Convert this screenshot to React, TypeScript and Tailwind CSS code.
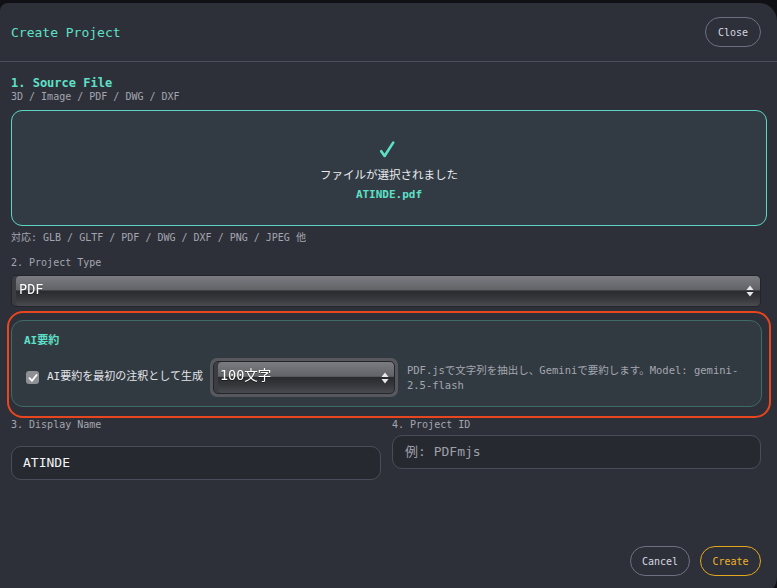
import React from "react";

const mono = "font-['DejaVu_Sans_Mono','Noto_Sans_CJK_JP',monospace]";

function Arrows() {
  return (
    <svg width="8" height="12" viewBox="0 0 8 12" className="shrink-0">
      <path d="M4 0.5 L7.5 5 L0.5 5 Z" fill="#e8e8ea" />
      <path d="M4 11.5 L7.5 7 L0.5 7 Z" fill="#e8e8ea" />
    </svg>
  );
}

function GlossySelect({ label, className, textClass }: { label: string; className: string; textClass: string }) {
  return (
    <div
      className={`relative flex items-center justify-between rounded-[5px] border border-[#24252a] bg-[linear-gradient(to_bottom,#7b7c81_0%,#626367_46%,#2a2b2f_50%,#37383c_75%,#4a4b50_100%)] shadow-[inset_4px_0_0_#3c3d42] ${className}`}
    >
      <span className={`${textClass} text-white drop-shadow-[0_1px_0_rgba(0,0,0,0.4)]`}>{label}</span>
      <Arrows />
    </div>
  );
}

export default function App() {
  return (
    <div className={`w-[777px] h-[588px] overflow-hidden bg-[#101114] ${mono}`}>
      <div className="mt-[3px] h-[592px] w-[777px] rounded-tl-[8px] rounded-tr-[18px] rounded-br-[18px] bg-[#2e3039] flex flex-col">
        {/* header */}
        <div className="h-[59px] shrink-0 flex items-center justify-between pl-[11px] pr-[16px] border-b border-[#4b4e5b]">
          <span className="text-[13px] text-[#5ee0c8] mt-[2px]">Create Project</span>
          <button className="h-[30px] w-[56px] rounded-full border border-[#6c7082] text-[10px] text-[#d5d8e0]">
            Close
          </button>
        </div>

        {/* body */}
        <div className="pl-[11px] pr-[10px] pt-[14px] flex flex-col">
          <div className="text-[12px] leading-[14px] font-bold text-[#5ee0c8]">1. Source File</div>
          <div className="text-[10px] leading-[14px] text-[#a3a6b0]">3D / Image / PDF / DWG / DXF</div>

          <div className="mt-[6px] h-[116px] rounded-[11px] border border-[#5cd6c4] bg-[#323b43] flex flex-col items-center justify-center">
            <svg width="16" height="17" viewBox="0 0 16 17" className="mt-[6px] ml-[-4px]">
              <path d="M2.2 10.2 L5.6 15 L14.2 1.6" stroke="#5ee0c8" strokeWidth="2.6" fill="none" strokeLinecap="round" strokeLinejoin="round" />
            </svg>
            <div className="mt-[8px] text-[11.5px] leading-[16px] text-[#e9ebef] font-['Noto_Sans_CJK_JP',sans-serif]">
              ファイルが選択されました
            </div>
            <div className="mt-[6px] text-[11px] leading-[14px] font-bold text-[#5ee0c8]">ATINDE.pdf</div>
          </div>

          <div className="mt-[5px] text-[10px] leading-[14px] text-[#a3a6b0]">対応: GLB / GLTF / PDF / DWG / DXF / PNG / JPEG 他</div>

          <div className="mt-[11px] text-[10px] leading-[14px] text-[#a3a6b0]">2. Project Type</div>
          <GlossySelect label="PDF" className="mt-[5px] h-[32px] w-[750px] pl-[7px] pr-[6px]" textClass="text-[13.5px] mt-[-3px]" />

          {/* orange highlight wrapping AI box */}
          <div className="mt-[4px] -ml-[4px] w-[764px] rounded-[16px] border-2 border-[#e8461e] pt-[7px] pl-[2px] pr-[7px] pb-[9px]">
            <div className="h-[87px] rounded-[12px] border border-[#3f6a66] bg-[#323a41] pl-[12px] pr-[12px] pt-[13px]">
              <div className="text-[11px] leading-[14px] font-bold text-[#5ee0c8]">AI要約</div>
              <div className="mt-[10px] flex items-center">
                <div className="ml-[2px] h-[13px] w-[13px] rounded-[3px] bg-[#8e9096] flex items-center justify-center">
                  <svg width="10" height="10" viewBox="0 0 10 10">
                    <path d="M1.5 5.2 L4 7.8 L8.6 2" stroke="white" strokeWidth="1.8" fill="none" strokeLinecap="round" strokeLinejoin="round" />
                  </svg>
                </div>
                <span className="ml-[8px] text-[11px] text-[#e3e5ea]">AI要約を最初の注釈として生成</span>
                <div className="ml-[7px] h-[39px] w-[188px] rounded-[7px] bg-[#56585e] p-[3px] shrink-0">
                  <GlossySelect label="100文字" className="h-full w-full pl-[6px] pr-[5px]" textClass="text-[13.5px] mt-[-5px]" />
                </div>
                <div className="ml-[9px] w-[340px] text-[10.5px] leading-[15px] text-[#a3a6b0]">
                  PDF.jsで文字列を抽出し、Geminiで要約します。Model: gemini-2.5-flash
                </div>
              </div>
            </div>
          </div>

          <div className="grid grid-cols-[370px_369px] gap-x-[11px]">
            <div className="flex flex-col">
              <div className="text-[10px] leading-[13px] text-[#a3a6b0]">3. Display Name</div>
              <div className="mt-[15px] h-[34px] rounded-[10px] border border-[#4a4d59] bg-[#272930] pl-[11px] flex items-center">
                <span className="text-[13px] text-[#f2f3f5]">ATINDE</span>
              </div>
            </div>
            <div className="flex flex-col">
              <div className="text-[10px] leading-[13px] text-[#a3a6b0]">4. Project ID</div>
              <div className="mt-[4px] h-[34px] rounded-[10px] border border-[#4a4d59] bg-[#272930] pl-[12px] flex items-center">
                <span className="text-[13px] text-[#9d9fa8]">例: PDFmjs</span>
              </div>
            </div>
          </div>
        </div>

        <div className="mt-[66px] flex justify-end gap-[10px] pr-[16px]">
          <button className="h-[30px] w-[60px] rounded-full border border-[#6c7082] text-[10px] text-[#d5d8e0]">Cancel</button>
          <button className="h-[30px] w-[61px] rounded-full border border-[#e3a71f] text-[10px] text-[#eeb02a]">Create</button>
        </div>
      </div>
    </div>
  );
}
